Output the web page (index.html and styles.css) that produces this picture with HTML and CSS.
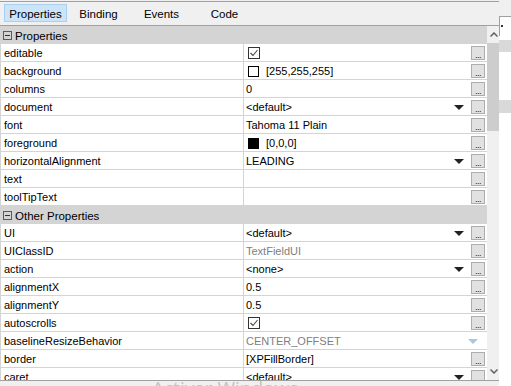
FILE: index.html
```html
<!DOCTYPE html>
<html lang="en">
<head>
  <meta charset="UTF-8" />
  <title>Properties</title>
  <link rel="stylesheet" href="styles.css">
</head>
<body>
<div class="window">
  <div class="panel">
    <div class="topline"></div>
    <div class="tabs">
      <div class="tab active">Properties</div>
      <div class="tab">Binding</div>
      <div class="tab">Events</div>
      <div class="tab">Code</div>
    </div>

    <div class="content">
      <div class="sheet">
        <div class="group"><span class="minus"></span><span class="label">Properties</span></div>

        <div class="row">
          <div class="name">editable</div>
          <div class="value"><span class="check"><svg width="10" height="10" viewBox="0 0 10 10"><polyline points="1.5,5 4,7.5 8.5,2" fill="none" stroke="#444" stroke-width="1.1"/></svg></span><span class="text"></span><span class="dots">...</span></div>
        </div>
        <div class="row">
          <div class="name">background</div>
          <div class="value"><span class="swatch"></span><span class="text">[255,255,255]</span><span class="dots">...</span></div>
        </div>
        <div class="row">
          <div class="name">columns</div>
          <div class="value"><span class="text">0</span><span class="dots">...</span></div>
        </div>
        <div class="row">
          <div class="name">document</div>
          <div class="value"><span class="text">&lt;default&gt;</span><span class="arrow"></span><span class="dots">...</span></div>
        </div>
        <div class="row">
          <div class="name">font</div>
          <div class="value"><span class="text">Tahoma 11 Plain</span><span class="dots">...</span></div>
        </div>
        <div class="row">
          <div class="name">foreground</div>
          <div class="value"><span class="swatch black"></span><span class="text">[0,0,0]</span><span class="dots">...</span></div>
        </div>
        <div class="row">
          <div class="name">horizontalAlignment</div>
          <div class="value"><span class="text">LEADING</span><span class="arrow"></span><span class="dots">...</span></div>
        </div>
        <div class="row">
          <div class="name">text</div>
          <div class="value"><span class="text"></span><span class="dots">...</span></div>
        </div>
        <div class="row">
          <div class="name">toolTipText</div>
          <div class="value"><span class="text"></span><span class="dots">...</span></div>
        </div>

        <div class="group"><span class="minus"></span><span class="label">Other Properties</span></div>

        <div class="row">
          <div class="name">UI</div>
          <div class="value"><span class="text">&lt;default&gt;</span><span class="arrow"></span><span class="dots">...</span></div>
        </div>
        <div class="row">
          <div class="name">UIClassID</div>
          <div class="value"><span class="text grey">TextFieldUI</span><span class="dots">...</span></div>
        </div>
        <div class="row">
          <div class="name">action</div>
          <div class="value"><span class="text">&lt;none&gt;</span><span class="arrow"></span><span class="dots">...</span></div>
        </div>
        <div class="row">
          <div class="name">alignmentX</div>
          <div class="value"><span class="text">0.5</span><span class="dots">...</span></div>
        </div>
        <div class="row">
          <div class="name">alignmentY</div>
          <div class="value"><span class="text">0.5</span><span class="dots">...</span></div>
        </div>
        <div class="row">
          <div class="name">autoscrolls</div>
          <div class="value"><span class="check"><svg width="10" height="10" viewBox="0 0 10 10"><polyline points="1.5,5 4,7.5 8.5,2" fill="none" stroke="#444" stroke-width="1.1"/></svg></span><span class="text"></span><span class="dots">...</span></div>
        </div>
        <div class="row">
          <div class="name">baselineResizeBehavior</div>
          <div class="value"><span class="text grey">CENTER_OFFSET</span><span class="arrow light"></span></div>
        </div>
        <div class="row">
          <div class="name">border</div>
          <div class="value"><span class="text">[XPFillBorder]</span><span class="dots">...</span></div>
        </div>
        <div class="row">
          <div class="name">caret</div>
          <div class="value"><span class="text">&lt;default&gt;</span><span class="arrow"></span><span class="dots">...</span></div>
        </div>
      </div>

      <div class="scrollbar">
        <div class="sb-btn"><svg width="8" height="5" viewBox="0 0 8 5"><polyline points="0.5,4.5 4,1 7.5,4.5" fill="none" stroke="#606060" stroke-width="1.5"/></svg></div>
        <div class="thumb"></div>
        <div class="track"></div>
        <div class="sb-btn"><svg width="8" height="5" viewBox="0 0 8 5"><polyline points="0.5,0.5 4,4 7.5,0.5" fill="none" stroke="#606060" stroke-width="1.5"/></svg></div>
      </div>
    </div>
    <div class="bottomline"></div>
  </div>

  <div class="side">
    <div class="side-top"></div>
    <div class="side-box"><span class="dot"></span></div>
    <div class="side-block first"></div>
    <div class="side-block second"></div>
  </div>
</div>

<div class="watermark">Activar Windows</div>
</body>
</html>
```

FILE: styles.css
```css
* {
  box-sizing: border-box;
}

body {
  margin: 0;
  width: 511px;
  height: 386px;
  overflow: hidden;
  position: relative;
  background: #fff;
  color: #000;
  font-family: "Liberation Sans", Arial, sans-serif;
  font-size: 11px;
}

.window {
  display: flex;
  height: 386px;
}

.panel {
  width: 499px;
  display: flex;
  flex-direction: column;
  background: #f0f0f0;
}

.topline {
  margin-top: 1px;
  height: 1px;
  background: #a0a0a0;
}

.tabs {
  display: flex;
  height: 24px;
  padding: 2px 0 0 4px;
  border-bottom: 1px solid #a0a0a0;
}

.tab {
  width: 63px;
  height: 18px;
  padding-top: 1px;
  display: flex;
  align-items: center;
  justify-content: center;
  border: 1px solid transparent;
  font-size: 11.5px;
}

.tab.active {
  background: #cce4f7;
  border-color: #a8d0f0;
}

.content {
  display: flex;
  height: 354px;
}

.sheet {
  width: 487px;
  overflow: hidden;
  background: #fff;
  border-left: 1px solid #d4d4d4;
}

.group {
  height: 18px;
  display: flex;
  align-items: center;
  gap: 3px;
  padding-left: 2px;
  background: #d4d4d4;
  font-size: 11.5px;
}

.label {
  padding-top: 2px;
}

.minus {
  width: 9px;
  height: 9px;
  margin-top: 1px;
  border: 1px solid #5a5a5a;
  position: relative;
}

.minus::after {
  content: "";
  position: absolute;
  left: 1px;
  right: 1px;
  top: 3px;
  height: 1px;
  background: #333;
}

.row {
  display: flex;
  height: 18px;
  border-bottom: 1px solid #d4d4d4;
}

.name {
  width: 243px;
  padding: 2px 0 0 3px;
  line-height: 15px;
  border-right: 1px solid #d4d4d4;
  white-space: nowrap;
}

.value {
  flex: 1;
  display: flex;
  align-items: center;
  padding: 0 2px 0 2px;
  white-space: nowrap;
}

.text {
  flex: 1;
  padding-top: 2px;
  line-height: 15px;
}

.text.grey {
  color: #808080;
}

.check {
  width: 12px;
  height: 12px;
  margin: 1px 0 0 2px;
  border: 1px solid #333;
  display: flex;
  align-items: center;
  justify-content: center;
}

.swatch {
  width: 11px;
  height: 11px;
  margin: 1px 7px 0 2px;
  border: 1px solid #000;
  background: #fff;
}

.swatch.black {
  background: #000;
}

.arrow {
  width: 0;
  height: 0;
  margin: 1px 7px 0 0;
  border-left: 5px solid transparent;
  border-right: 5px solid transparent;
  border-top: 5px solid #222;
}

.arrow.light {
  border-top-color: #a9c7e3;
}

.dots {
  width: 14px;
  height: 14px;
  border: 1px solid #adadad;
  background: #e1e1e1;
  color: #222;
  font-size: 9px;
  line-height: 16px;
  text-align: center;
  letter-spacing: -0.5px;
}

.scrollbar {
  width: 12px;
  display: flex;
  flex-direction: column;
  background: #f0f0f0;
}

.sb-btn {
  height: 17px;
  display: flex;
  align-items: center;
  justify-content: center;
  padding-left: 2px;
}

.thumb {
  height: 88px;
  background: #cdcdcd;
}

.track {
  flex: 1;
}

.bottomline {
  height: 1px;
  background: #a0a0a0;
}

.side {
  width: 12px;
  background: #fff;
}

.side-top {
  height: 16px;
  background: #f0f0f0;
}

.side-box {
  height: 20px;
  border-top: 1px solid #a0a0a0;
  border-left: 1px solid #a0a0a0;
  padding: 8px 0 0 1px;
}

.dot {
  display: block;
  width: 2px;
  height: 2px;
  background: #333;
}

.side-block {
  height: 12px;
  background: #d9d9d9;
}

.side-block.first {
  margin-top: 4px;
}

.side-block.second {
  margin-top: 48px;
  height: 13px;
}

.watermark {
  position: absolute;
  left: 152px;
  top: 379px;
  font-family: "Open Sans", sans-serif;
  font-size: 19px;
  line-height: 19px;
  color: #c4c4c4;
  white-space: nowrap;
}
```
